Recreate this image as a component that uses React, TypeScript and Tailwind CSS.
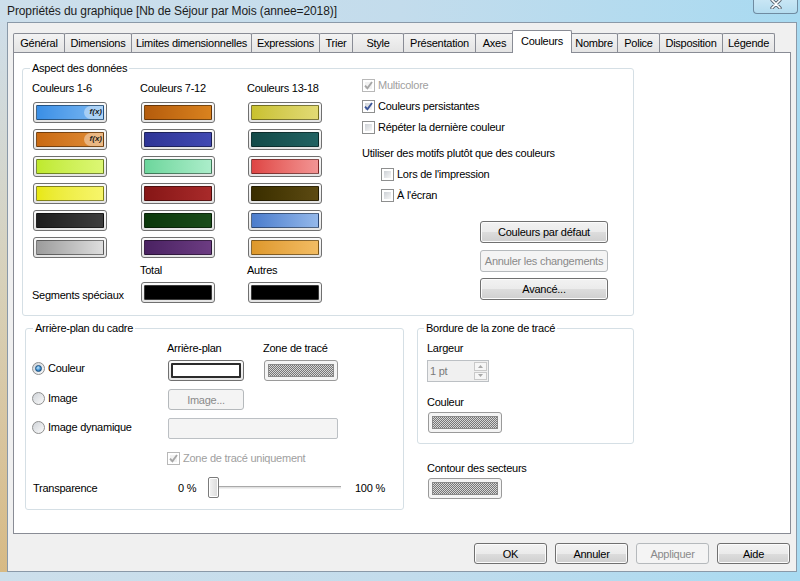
import React from 'react';

type TabDef = { label: string; w: string; active?: boolean };

const tabs: TabDef[] = [
  { label: 'Général', w: 'w-[52px]' },
  { label: 'Dimensions', w: 'w-[68px]' },
  { label: 'Limites dimensionnelles', w: 'w-[121px]' },
  { label: 'Expressions', w: 'w-[69px]' },
  { label: 'Trier', w: 'w-[34px]' },
  { label: 'Style', w: 'w-[52px]' },
  { label: 'Présentation', w: 'w-[73px]' },
  { label: 'Axes', w: 'w-[39px]' },
  { label: 'Couleurs', w: 'w-[60px]', active: true },
  { label: 'Nombre', w: 'w-[48px]' },
  { label: 'Police', w: 'w-[43px]' },
  { label: 'Disposition', w: 'w-[64px]' },
  { label: 'Légende', w: 'w-[53px]' },
];

// rows of the three colour columns, left to right
const swatchRows: string[][] = [
  ['from-[#3a8fe6] to-[#7ab8f2]', 'from-[#b55c0c] to-[#d9821e]', 'from-[#c9c12e] to-[#e2da74]'],
  ['from-[#c96a12] to-[#e08c34]', 'from-[#2e3496] to-[#4149b2]', 'from-[#124a48] to-[#216262]'],
  ['from-[#bfe92c] to-[#dcf774]', 'from-[#6cd69c] to-[#abedca]', 'from-[#de4444] to-[#f29494]'],
  ['from-[#e8e810] to-[#f7f56a]', 'from-[#861616] to-[#a82a2a]', 'from-[#3a2e00] to-[#5c4a12]'],
  ['from-[#1e1e1e] to-[#3e3e3e]', 'from-[#0a380a] to-[#1a4c1a]', 'from-[#4b7ccc] to-[#94b8ea]'],
  ['from-[#9c9c9c] to-[#dedede]', 'from-[#4a2262] to-[#6c3c82]', 'from-[#de982a] to-[#f2bc62]'],
];

const checker =
  'bg-[repeating-conic-gradient(#767676_0%_25%,#d6d6d6_0%_50%)] bg-[length:2px_2px]';

function Swatch({ color, fx }: { color: string; fx?: boolean }) {
  return (
    <div className="w-[74px] h-[21px] rounded-[3px] border border-[#707070] bg-linear-to-b from-[#fbfbfb] to-[#e4e4e4] p-[2px]">
      <div className={`relative h-full overflow-hidden rounded-[1px] border border-[#00000070] bg-linear-to-r ${color}`}>
        {fx && (
          <span className="absolute right-0 inset-y-0 w-[19px] rounded-l-[9px] bg-white/40 text-[8px] leading-[11px] italic font-bold tracking-normal text-[#1b1b1b] text-right pr-[1px]">
            f(x)
          </span>
        )}
      </div>
    </div>
  );
}

function SolidSwatch({ inner, w = 'w-[74px]' }: { inner: string; w?: string }) {
  return (
    <div className={`${w} h-[21px] rounded-[3px] border border-[#707070] bg-linear-to-b from-[#fbfbfb] to-[#e4e4e4] p-[2px]`}>
      <div className={`h-full rounded-[1px] ${inner}`} />
    </div>
  );
}

function CheckerSwatch() {
  return (
    <div className="w-[74px] h-[21px] rounded-[3px] border border-[#9a9a9a] bg-[#f4f4f4] p-[3px]">
      <div className={`h-full border border-[#8a8a8a] ${checker}`} />
    </div>
  );
}

function Check({ checked, disabled }: { checked?: boolean; disabled?: boolean }) {
  return (
    <span
      className={`relative shrink-0 w-[13px] h-[13px] border p-[2px] flex bg-white ${
        disabled ? 'border-[#b8b8b8]' : 'border-[#8e8f8f]'
      }`}
    >
      <span
        className={`flex-1 ${
          disabled ? 'bg-[#f2f2f2]' : 'bg-linear-to-br from-[#cdd1d6] to-[#f7f7f7]'
        }`}
      />
      {checked && (
        <svg viewBox="0 0 13 13" className="absolute -inset-px w-[13px] h-[13px]">
          <path
            d="M3 6.6 L5.4 9.2 L10 3"
            fill="none"
            stroke={disabled ? '#a6a6a6' : '#3a5498'}
            strokeWidth="1.9"
          />
        </svg>
      )}
    </span>
  );
}

function Radio({ checked }: { checked?: boolean }) {
  return (
    <span className="shrink-0 w-[13px] h-[13px] rounded-full border border-[#8e8f8f] bg-linear-to-br from-[#cfd3d8] to-[#fbfbfb] flex items-center justify-center">
      {checked && (
        <span className="w-[7px] h-[7px] rounded-full border border-[#1a4f7e] bg-[radial-gradient(circle_at_40%_35%,#bfe6ff,#3f8fd0_55%,#0f4d86)]" />
      )}
    </span>
  );
}

function Btn({
  children,
  w,
  h = 'h-[22px]',
  disabled,
}: {
  children: React.ReactNode;
  w: string;
  h?: string;
  disabled?: boolean;
}) {
  return (
    <div
      className={`${w} ${h} shrink-0 rounded-[3px] border flex items-center justify-center ${
        disabled
          ? 'border-[#b5b9bc] bg-[#f4f4f4] text-[#8a8a8a]'
          : 'border-[#707070] bg-[linear-gradient(#f2f2f2,#ebebeb_50%,#dddddd_50%,#cfcfcf)] shadow-[inset_0_0_0_1px_#fbfbfb]'
      }`}
    >
      {children}
    </div>
  );
}

function Tab({ t }: { t: TabDef }) {
  if (t.active) {
    return (
      <div
        className={`${t.w} relative z-10 -ml-px -mr-[2px] -mb-px h-[23px] border border-b-0 border-[#898c95] bg-white rounded-t-[2px] flex justify-center pt-[3px]`}
      >
        {t.label}
      </div>
    );
  }
  return (
    <div
      className={`${t.w} -mr-px h-[19px] border border-b-0 border-[#898c95] bg-linear-to-b from-[#f3f3f3] to-[#e4e4e4] rounded-t-[2px] flex justify-center pt-[2px]`}
    >
      {t.label}
    </div>
  );
}

function CheckRow({
  label,
  checked,
  disabled,
  className = '',
}: {
  label: string;
  checked?: boolean;
  disabled?: boolean;
  className?: string;
}) {
  return (
    <div className={`flex items-center gap-[3px] h-[14px] ${className}`}>
      <Check checked={checked} disabled={disabled} />
      <span className={disabled ? 'text-[#a0a0a0]' : ''}>{label}</span>
    </div>
  );
}

export default function App() {
  return (
    <div className="w-[800px] h-[581px] overflow-hidden bg-linear-to-r from-[#cddfeb] via-[#c3dcec] to-[#a8daf1] font-['Liberation_Sans',Arial,sans-serif] text-[11px] leading-[14px] tracking-[-0.25px] text-black">
      {/* title bar */}
      <div className="h-[22px] flex items-start justify-between">
        <div className="pl-[7px] pt-[3px] text-[12px] leading-[16px] tracking-[-0.1px] text-[#1c1c1c]">
          Propriétés du graphique [Nb de Séjour par Mois (annee=2018)]
        </div>
        <div className="mr-[2px] w-[45px] h-[14px] rounded-b-[4px] border border-t-0 border-[#6f8ba1] bg-linear-to-b from-[#c8e6f5] to-[#b4dcef] flex justify-center">
          <svg viewBox="0 0 14 10" className="w-[14px] h-[10px] -mt-[1px]">
            <path d="M3 1 L11 9 M11 1 L3 9" stroke="#5a6470" strokeWidth="3.4" strokeLinecap="round" />
            <path d="M3 1 L11 9 M11 1 L3 9" stroke="#ffffff" strokeWidth="1.6" strokeLinecap="round" />
          </svg>
        </div>
      </div>

      <div className="flex">
        <div className="w-[7px] h-[550px] bg-linear-to-b from-[#cfdde8] via-[#dcc9a0] to-[#dcaa58] opacity-70" />
        {/* client area */}
        <div className="w-[790px] h-[550px] border border-[#8a99a8] bg-[#f0f0f0]">
          {/* tab strip */}
          <div className="pl-[5px] pt-[7px] h-[29px] flex items-end">
            {tabs.map((t) => (
              <Tab key={t.label} t={t} />
            ))}
          </div>

          {/* tab page */}
          <div className="ml-[5px] w-[778px] h-[482px] border border-[#898c95] bg-white">
            {/* Aspect des données */}
            <fieldset className="ml-[8px] mt-[8px] w-[612px] h-[255px] border border-[#d5dfe5] rounded-[3px]">
              <legend className="ml-[7px] px-[2px] leading-[14px]">Aspect des données</legend>
              <div className="flex">
                <div className="pl-[10px] pt-[6px] grid grid-cols-[108px_107px_74px] gap-y-[6px]">
                  <div className="-ml-px leading-[15px]">Couleurs 1-6</div>
                  <div className="-ml-px leading-[15px]">Couleurs 7-12</div>
                  <div className="-ml-px leading-[15px]">Couleurs 13-18</div>
                  {swatchRows.map((row, r) =>
                    row.map((c, i) => (
                      <Swatch key={`${r}-${i}`} color={c} fx={i === 0 && r < 2} />
                    ))
                  )}
                  <div />
                  <div className="-ml-px leading-[12px]">Total</div>
                  <div className="-ml-px leading-[12px]">Autres</div>
                  <div className="-ml-px self-end mb-[1px]">Segments spéciaux</div>
                  <SolidSwatch inner="bg-black border border-[#3a3a3a]" />
                  <SolidSwatch inner="bg-black border border-[#3a3a3a]" />
                </div>

                <div className="ml-[40px] pt-[3px] flex flex-col">
                  <CheckRow label="Multicolore" checked disabled />
                  <CheckRow label="Couleurs persistantes" checked className="mt-[7px]" />
                  <CheckRow label="Répéter la dernière couleur" className="mt-[7px]" />
                  <div className="mt-[12px] h-[14px]">Utiliser des motifs plutôt que des couleurs</div>
                  <CheckRow label="Lors de l'impression" className="mt-[7px] ml-[19px]" />
                  <CheckRow label="À l'écran" className="mt-[7px] ml-[19px]" />
                  <div className="ml-[118px] mt-[19px] flex flex-col">
                    <Btn w="w-[128px]">Couleurs par défaut</Btn>
                    <div className="mt-[7px]">
                      <Btn w="w-[128px]" disabled>
                        Annuler les changements
                      </Btn>
                    </div>
                    <div className="mt-[6px]">
                      <Btn w="w-[128px]">Avancé...</Btn>
                    </div>
                  </div>
                </div>
              </div>
            </fieldset>

            <div className="flex items-start mt-[5px]">
              {/* Arrière-plan du cadre */}
              <fieldset className="ml-[11px] w-[379px] h-[189px] border border-[#d5dfe5] rounded-[3px]">
                <legend className="ml-[7px] px-[2px] leading-[14px]">Arrière-plan du cadre</legend>
                <div className="pl-[6px]">
                  <div className="mt-[6px] h-[14px] flex">
                    <div className="w-[135px]" />
                    <div className="w-[96px]">Arrière-plan</div>
                    <div>Zone de tracé</div>
                  </div>
                  <div className="mt-[5px] h-[21px] flex">
                    <div className="w-[136px] h-[14px] mt-[1px] flex items-center gap-[3px]">
                      <Radio checked />
                      <span>Couleur</span>
                    </div>
                    <SolidSwatch w="w-[76px]" inner="bg-white border-2 border-[#2b2b2b]" />
                    <div className="ml-[20px]">
                      <CheckerSwatch />
                    </div>
                  </div>
                  <div className="mt-[8px] h-[21px] flex">
                    <div className="w-[136px] h-[14px] mt-[2px] flex items-center gap-[3px]">
                      <Radio />
                      <span>Image</span>
                    </div>
                    <Btn w="w-[76px]" h="h-[21px]" disabled>
                      Image...
                    </Btn>
                  </div>
                  <div className="mt-[8px] h-[21px] flex">
                    <div className="w-[136px] h-[14px] mt-[2px] flex items-center gap-[3px]">
                      <Radio />
                      <span>Image dynamique</span>
                    </div>
                    <div className="w-[170px] h-[21px] rounded-[2px] border border-[#bcc0c4] bg-[#f4f4f4]" />
                  </div>
                  <CheckRow label="Zone de tracé uniquement" checked disabled className="mt-[12px] ml-[135px]" />
                  <div className="mt-[12px] h-[21px] flex items-center">
                    <div className="ml-px w-[145px]">Transparence</div>
                    <div className="w-[30px]">0 %</div>
                    <div className="w-[133px] flex items-center">
                      <div className="w-[11px] h-[21px] rounded-[2px] border border-[#7b7b7b] bg-linear-to-r from-[#f4f4f4] to-[#dadada] shadow-[inset_0_0_0_1px_#ffffff]" />
                      <div className="flex-1 h-[3px] border-t border-[#a9a9a9] border-b border-b-[#f0f0f0] bg-[#e2e2e2]" />
                    </div>
                    <div className="ml-[14px]">100 %</div>
                  </div>
                </div>
              </fieldset>

              <div className="ml-[13px] flex flex-col">
                {/* Bordure de la zone de tracé */}
                <fieldset className="w-[217px] h-[123px] border border-[#d5dfe5] rounded-[3px]">
                  <legend className="ml-[6px] px-[2px] leading-[14px]">Bordure de la zone de tracé</legend>
                  <div className="pl-[9px]">
                    <div className="mt-[6px] h-[14px]">Largeur</div>
                    <div className="mt-[5px] w-[62px] h-[22px] border border-[#bcc0c4] bg-[#f0f0f0] flex">
                      <div className="flex-1 pl-[2px] pt-[3px] text-[#7a7a7a]">1 pt</div>
                      <div className="w-[15px] flex flex-col p-[1px] gap-px">
                        <div className="flex-1 border border-[#c9c9c9] bg-[#f6f6f6] flex items-center justify-center">
                          <svg viewBox="0 0 5 3" className="w-[5px] h-[3px]">
                            <path d="M0 3 L2.5 0 L5 3 Z" fill="#a8a8a8" />
                          </svg>
                        </div>
                        <div className="flex-1 border border-[#c9c9c9] bg-[#f6f6f6] flex items-center justify-center">
                          <svg viewBox="0 0 5 3" className="w-[5px] h-[3px]">
                            <path d="M0 0 L2.5 3 L5 0 Z" fill="#a8a8a8" />
                          </svg>
                        </div>
                      </div>
                    </div>
                    <div className="mt-[13px] h-[14px]">Couleur</div>
                    <div className="mt-[3px] ml-px">
                      <CheckerSwatch />
                    </div>
                  </div>
                </fieldset>
                <div className="mt-[17px] ml-[10px] h-[14px]">Contour des secteurs</div>
                <div className="mt-[3px] ml-[11px]">
                  <CheckerSwatch />
                </div>
              </div>
            </div>
          </div>

          {/* dialog buttons */}
          <div className="mt-[9px] pr-[6px] flex justify-end gap-[8px]">
            <Btn w="w-[73px]" h="h-[21px]">OK</Btn>
            <Btn w="w-[73px]" h="h-[21px]">Annuler</Btn>
            <Btn w="w-[73px]" h="h-[21px]" disabled>
              Appliquer
            </Btn>
            <Btn w="w-[73px]" h="h-[21px]">Aide</Btn>
          </div>
        </div>
      </div>
    </div>
  );
}
